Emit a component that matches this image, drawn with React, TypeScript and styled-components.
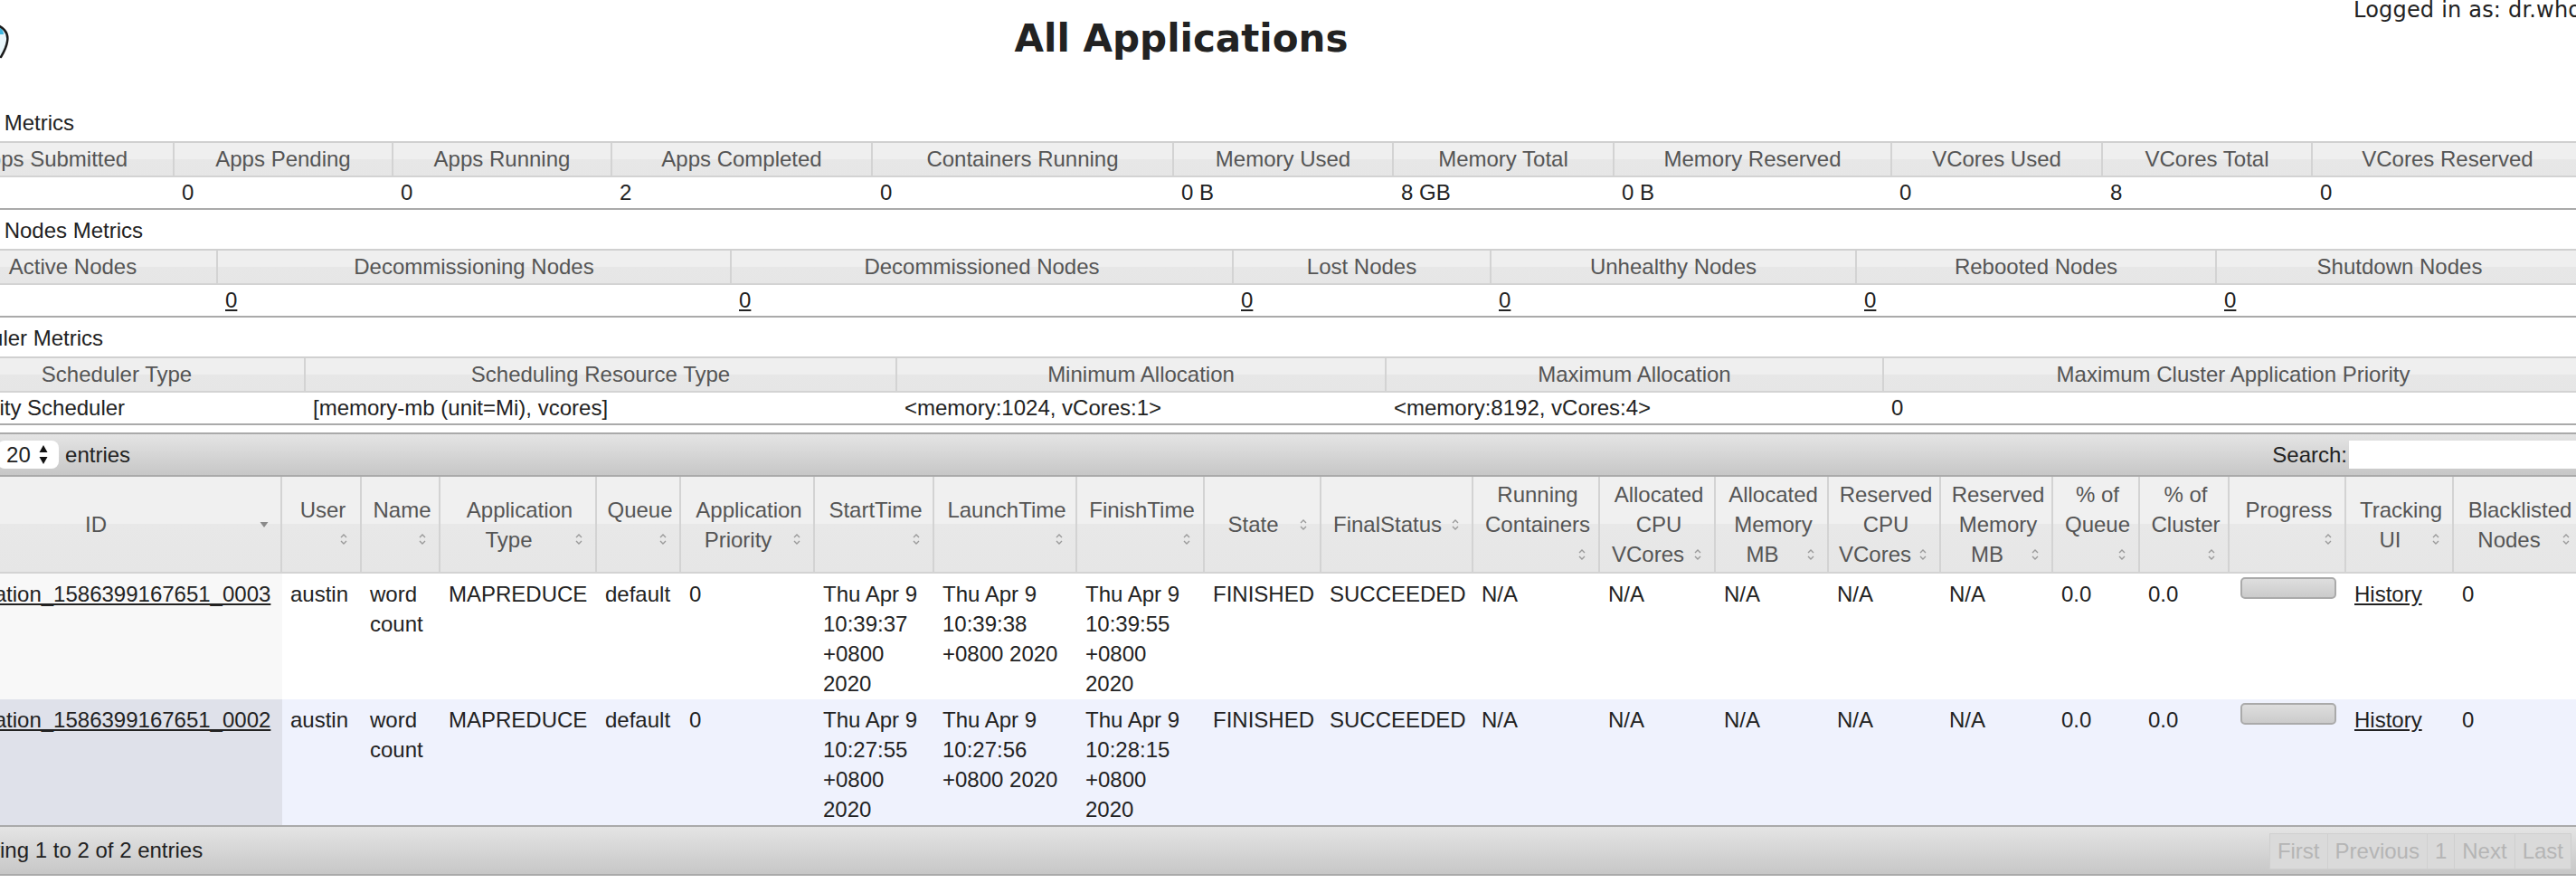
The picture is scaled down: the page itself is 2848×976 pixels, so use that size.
import React from "react";
import styled, { createGlobalStyle } from "styled-components";

const GlobalStyle = createGlobalStyle`
  html, body { margin: 0; padding: 0; background: #fff; }
  body {
    font-family: "Liberation Sans", Arial, Helvetica, sans-serif;
    font-size: 24px;
    color: #222;
  }
  #root { width: 100vw; height: 100vh; overflow: hidden; }
`;

const Viewport = styled.div`
  width: 2848px;
  height: 976px;
  overflow: hidden;
  background: #fff;
`;

/* the page is wider than the window and scrolled sideways: the canvas starts left of the window */
const Canvas = styled.div`
  width: 3108px;
  margin-left: -248px;
`;

const Header = styled.header`
  display: grid;
  grid-template-columns: 258px 1fr 258px;
  height: 113px;
  align-items: start;
`;

const LogoBox = styled.div`
  height: 80px;
  display: flex;
  justify-content: flex-end;
`;

const Title = styled.h1`
  margin: 22px 0 0;
  font-family: "DejaVu Sans", Verdana, sans-serif;
  font-weight: bold;
  font-size: 42px;
  line-height: 42px;
  text-align: center;
  color: #222;
`;

const User = styled.div`
  font-family: "DejaVu Sans", Verdana, sans-serif;
  font-size: 24px;
  letter-spacing: 0.2px;
  line-height: 22px;
  color: #222;
  white-space: nowrap;
`;

const Body = styled.div`
  display: flex;
`;

const Nav = styled.nav`
  width: 170px;
  flex-shrink: 0;
`;

const Main = styled.main`
  width: 2933px;
  flex-shrink: 0;
`;

const SectionLabel = styled.div`
  line-height: 33px;
  margin: 6px 0 4px;
  color: #222;
  white-space: nowrap;
`;

const MetricsTable = styled.table`
  width: 100%;
  table-layout: fixed;
  border-collapse: separate;
  border-spacing: 0;
  border-top: 2px solid #d0d0d0;
  border-bottom: 2px solid #aaa;
`;

const MTh = styled.th`
  height: 36px;
  padding: 0 4px;
  font-weight: normal;
  color: #555;
  text-align: center;
  white-space: nowrap;
  background: linear-gradient(#efefef 0%, #efefef 50%, #e7e7e7 50%, #e6e6e6 100%);
  border-right: 2px solid #d3d3d3;
  border-bottom: 2px solid #d3d3d3;
  &:last-child { border-right: none; }
`;

const MTd = styled.td`
  height: 34px;
  padding: 0 8px;
  text-align: left;
  white-space: nowrap;
  color: #222;
`;

const Link = styled.a`
  color: #222;
  text-decoration: underline;
`;

const Wrapper = styled.div`
  margin-top: 8px;
`;

const Toolbar = styled.div<{ $footer?: boolean }>`
  display: flex;
  align-items: center;
  justify-content: space-between;
  height: ${(p) => (p.$footer ? "52px" : "45px")};
  padding: ${(p) => (p.$footer ? "0 12px 0 18px" : "0 0 0 8px")};
  border-top: 2px solid #aaa;
  border-bottom: 2px solid #aaa;
  background: linear-gradient(#e4e4e4, #c7c7c7);
  color: #222;
  white-space: nowrap;
`;

const LengthBox = styled.label`
  display: flex;
  align-items: center;
  gap: 7px;
`;

const SelectWrap = styled.span`
  position: relative;
  display: inline-flex;
  align-items: center;
  height: 31px;
  width: 68px;
  background: #fff;
  border-radius: 8px;
`;

const Select = styled.select`
  appearance: none;
  border: none;
  background: transparent;
  font: inherit;
  font-size: 24px;
  color: #222;
  padding: 0 0 0 10px;
  width: 100%;
  height: 31px;
  outline: none;
`;

const SelectArrows = styled.svg`
  position: absolute;
  right: 12px;
  top: 4px;
  pointer-events: none;
`;

const SearchBox = styled.label`
  display: flex;
  align-items: center;
`;

const SearchInput = styled.input`
  width: 258px;
  height: 31px;
  border: none;
  background: #fff;
  margin-left: 2px;
  padding: 0;
  font: inherit;
  outline: none;
`;

const AppsTable = styled.table`
  width: 100%;
  table-layout: fixed;
  border-collapse: separate;
  border-spacing: 0;
`;

const ATh = styled.th`
  padding: 3px 6px 3px 10px;
  font-weight: normal;
  color: #555;
  line-height: 33px;
  text-align: center;
  vertical-align: middle;
  background: linear-gradient(#f0f0f0 0%, #f0f0f0 50%, #e8e8e8 50%, #e6e6e6 100%);
  border-right: 2px solid #d3d3d3;
  border-bottom: 2px solid #d3d3d3;
  &:last-child { border-right: none; }
`;

const SortIcon = styled.span`
  float: right;
  width: 24px;
  height: 33px;
  display: flex;
  align-items: center;
  justify-content: center;
`;

const Row = styled.tr<{ $odd?: boolean }>`
  background: ${(p) => (p.$odd ? "#eff2fd" : "#ffffff")};
`;

const Td = styled.td<{ $sorted?: boolean; $odd?: boolean }>`
  padding: 6px 9px 1px 9px;
  line-height: 33px;
  vertical-align: top;
  text-align: left;
  color: #222;
  background: ${(p) => (p.$sorted ? (p.$odd ? "#dfe1ea" : "#f8f8f8") : "transparent")};
  overflow: hidden;
`;

const Progress = styled.div`
  width: 106px;
  height: 24px;
  box-sizing: border-box;
  margin: -2px 0 0 3px;
  border: 2px solid #aaa;
  border-radius: 5px;
  background: linear-gradient(#dedede, #cbcbcb);
`;

const Info = styled.div``;

const Paginate = styled.div`
  display: flex;
  height: 40px;
  margin-top: 2px;
`;

const PageButton = styled.span`
  display: flex;
  align-items: center;
  padding: 0 8px;
  color: #b5b5b5;
  background: #dadada;
  border: 1px solid #cfcfcf;
  margin-left: -1px;
`;

const SortBoth = () => (
  <svg width="12" height="16" viewBox="0 0 12 16">
    <path d="M3 6 L6 3 L9 6" fill="none" stroke="#9a9a9a" strokeWidth="1.4" />
    <path d="M3 10 L6 13 L9 10" fill="none" stroke="#9a9a9a" strokeWidth="1.4" />
  </svg>
);

const SortDesc = () => (
  <svg width="12" height="16" viewBox="0 0 12 16">
    <path d="M1.5 5 L10.5 5 L6 11 Z" fill="#8a8a8a" />
  </svg>
);

/* only the right tip of the Hadoop elephant logo shows at the window's left edge */
const HadoopLogo = () => (
  <svg width="258" height="80" viewBox="0 0 258 80">
    <path d="M238 27 C 250 28, 258 36, 256 46 C 255 53, 252 58, 249 63 L 238 63 Z" fill="#e9f6fb" />
    <path d="M246 30 C 250 31, 252 34, 252 38 L 246 38 Z" fill="#3fb6df" />
    <path
      d="M240 27 C 251 28, 258 36, 256 46 C 255 53, 252 58, 249 63"
      fill="none"
      stroke="#1b1b1b"
      strokeWidth="2.5"
      strokeLinecap="round"
    />
  </svg>
);

type Metric = { head: string; value: React.ReactNode; w?: number };

const clusterMetrics: Metric[] = [
  { head: "Apps Submitted", value: "2", w: 271 },
  { head: "Apps Pending", value: "0", w: 242 },
  { head: "Apps Running", value: "0", w: 242 },
  { head: "Apps Completed", value: "2", w: 288 },
  { head: "Containers Running", value: "0", w: 333 },
  { head: "Memory Used", value: "0 B", w: 243 },
  { head: "Memory Total", value: "8 GB", w: 244 },
  { head: "Memory Reserved", value: "0 B", w: 307 },
  { head: "VCores Used", value: "0", w: 233 },
  { head: "VCores Total", value: "8", w: 232 },
  { head: "VCores Reserved", value: "0" },
];

const nodeMetrics: Metric[] = [
  { head: "Active Nodes", value: <Link>1</Link>, w: 319 },
  { head: "Decommissioning Nodes", value: <Link>0</Link>, w: 568 },
  { head: "Decommissioned Nodes", value: <Link>0</Link>, w: 555 },
  { head: "Lost Nodes", value: <Link>0</Link>, w: 285 },
  { head: "Unhealthy Nodes", value: <Link>0</Link>, w: 404 },
  { head: "Rebooted Nodes", value: <Link>0</Link>, w: 398 },
  { head: "Shutdown Nodes", value: <Link>0</Link> },
];

const schedulerMetrics: Metric[] = [
  { head: "Scheduler Type", value: "Capacity Scheduler", w: 416 },
  { head: "Scheduling Resource Type", value: "[memory-mb (unit=Mi), vcores]", w: 654 },
  { head: "Minimum Allocation", value: "<memory:1024, vCores:1>", w: 541 },
  { head: "Maximum Allocation", value: "<memory:8192, vCores:4>", w: 550 },
  { head: "Maximum Cluster Application Priority", value: "0" },
];

const MetricsBlock = ({ label, items }: { label: string; items: Metric[] }) => (
  <section>
    <SectionLabel>{label}</SectionLabel>
    <MetricsTable>
      <colgroup>
        {items.map((m) => (
          <col key={m.head} style={m.w ? { width: m.w } : undefined} />
        ))}
      </colgroup>
      <thead>
        <tr>
          {items.map((m) => (
            <MTh key={m.head}>{m.head}</MTh>
          ))}
        </tr>
      </thead>
      <tbody>
        <tr>
          {items.map((m) => (
            <MTd key={m.head}>{m.value}</MTd>
          ))}
        </tr>
      </tbody>
    </MetricsTable>
  </section>
);

type AppCol = { head: string; w?: number; desc?: boolean };

const appCols: AppCol[] = [
  { head: "ID", w: 390, desc: true },
  { head: "User", w: 88 },
  { head: "Name", w: 87 },
  { head: "Application Type", w: 173 },
  { head: "Queue", w: 93 },
  { head: "Application Priority", w: 148 },
  { head: "StartTime", w: 132 },
  { head: "LaunchTime", w: 158 },
  { head: "FinishTime", w: 141 },
  { head: "State", w: 129 },
  { head: "FinalStatus", w: 168 },
  { head: "Running Containers", w: 140 },
  { head: "Allocated CPU VCores", w: 128 },
  { head: "Allocated Memory MB", w: 125 },
  { head: "Reserved CPU VCores", w: 124 },
  { head: "Reserved Memory MB", w: 124 },
  { head: "% of Queue", w: 96 },
  { head: "% of Cluster", w: 99 },
  { head: "Progress", w: 129 },
  { head: "Tracking UI", w: 119 },
  { head: "Blacklisted Nodes" },
];

type App = { id: string; start: string; launch: string; finish: string };

const apps: App[] = [
  {
    id: "application_1586399167651_0003",
    start: "Thu Apr 9 10:39:37 +0800 2020",
    launch: "Thu Apr 9 10:39:38 +0800 2020",
    finish: "Thu Apr 9 10:39:55 +0800 2020",
  },
  {
    id: "application_1586399167651_0002",
    start: "Thu Apr 9 10:27:55 +0800 2020",
    launch: "Thu Apr 9 10:27:56 +0800 2020",
    finish: "Thu Apr 9 10:28:15 +0800 2020",
  },
];

export default function App() {
  return (
    <Viewport>
      <GlobalStyle />
      <Canvas>
        <Header>
          <LogoBox>
            <HadoopLogo />
          </LogoBox>
          <Title>All Applications</Title>
          <User>Logged in as: dr.who</User>
        </Header>
        <Body>
          <Nav />
          <Main>
            <MetricsBlock label="Cluster Metrics" items={clusterMetrics} />
            <MetricsBlock label="Cluster Nodes Metrics" items={nodeMetrics} />
            <MetricsBlock label="Scheduler Metrics" items={schedulerMetrics} />

            <Wrapper>
              <Toolbar>
                <LengthBox>
                  Show
                  <SelectWrap>
                    <Select defaultValue="20">
                      <option value="20">20</option>
                      <option value="40">40</option>
                      <option value="60">60</option>
                    </Select>
                    <SelectArrows width="10" height="23" viewBox="0 0 10 23">
                      <path d="M5 1 L9.5 9 L0.5 9 Z" fill="#111" />
                      <path d="M0.5 14 L9.5 14 L5 22 Z" fill="#111" />
                    </SelectArrows>
                  </SelectWrap>
                  entries
                </LengthBox>
                <SearchBox>
                  Search:
                  <SearchInput type="text" />
                </SearchBox>
              </Toolbar>

              <AppsTable>
                <colgroup>
                  {appCols.map((c) => (
                    <col key={c.head} style={c.w ? { width: c.w } : undefined} />
                  ))}
                </colgroup>
                <thead>
                  <tr>
                    {appCols.map((c) => (
                      <ATh key={c.head}>
                        {c.head}
                        <SortIcon>{c.desc ? <SortDesc /> : <SortBoth />}</SortIcon>
                      </ATh>
                    ))}
                  </tr>
                </thead>
                <tbody>
                  {apps.map((a, i) => {
                    const odd = i % 2 === 1;
                    return (
                      <Row key={a.id} $odd={odd}>
                        <Td $sorted $odd={odd}>
                          <Link>{a.id}</Link>
                        </Td>
                        <Td>austin</Td>
                        <Td>word count</Td>
                        <Td>MAPREDUCE</Td>
                        <Td>default</Td>
                        <Td>0</Td>
                        <Td>{a.start}</Td>
                        <Td>{a.launch}</Td>
                        <Td>{a.finish}</Td>
                        <Td>FINISHED</Td>
                        <Td>SUCCEEDED</Td>
                        <Td>N/A</Td>
                        <Td>N/A</Td>
                        <Td>N/A</Td>
                        <Td>N/A</Td>
                        <Td>N/A</Td>
                        <Td>0.0</Td>
                        <Td>0.0</Td>
                        <Td>
                          <Progress title="100.0%" />
                        </Td>
                        <Td>
                          <Link>History</Link>
                        </Td>
                        <Td>0</Td>
                      </Row>
                    );
                  })}
                </tbody>
              </AppsTable>

              <Toolbar $footer>
                <Info>Showing 1 to 2 of 2 entries</Info>
                <Paginate>
                  <PageButton>First</PageButton>
                  <PageButton>Previous</PageButton>
                  <PageButton>1</PageButton>
                  <PageButton>Next</PageButton>
                  <PageButton>Last</PageButton>
                </Paginate>
              </Toolbar>
            </Wrapper>
          </Main>
        </Body>
      </Canvas>
    </Viewport>
  );
}
